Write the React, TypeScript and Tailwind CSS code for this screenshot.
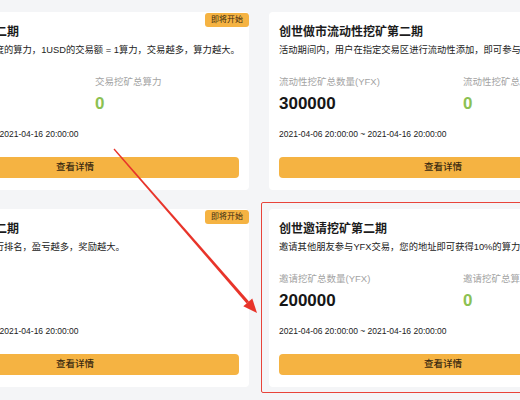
const font = "font-['Liberation_Sans','Noto_Sans_CJK_SC',sans-serif]"

type Stat = { label: string; value: string; green?: boolean }

type CardData = {
  title: string
  desc: string
  stats: Stat[]
  date: string
  badge?: boolean
}

const cards: CardData[] = [
  {
    title: '创世交易挖矿第二期',
    desc: '交易即可获得相应额度的算力，1USD的交易额 = 1算力，交易越多，算力越大。',
    stats: [
      { label: '交易挖矿总数量', value: '500000' },
      { label: '交易挖矿总算力', value: '0', green: true },
    ],
    date: '2021-04-06 20:00:00 ~ 2021-04-16 20:00:00',
    badge: true,
  },
  {
    title: '创世做市流动性挖矿第二期',
    desc: '活动期间内，用户在指定交易区进行流动性添加，即可参与流动性挖矿。',
    stats: [
      { label: '流动性挖矿总数量(YFX)', value: '300000' },
      { label: '流动性挖矿总算力', value: '0', green: true },
    ],
    date: '2021-04-06 20:00:00 ~ 2021-04-16 20:00:00',
  },
  {
    title: '创世盈亏挖矿第二期',
    desc: '根据用户盈亏情况进行排名，盈亏越多，奖励越大。',
    stats: [],
    date: '2021-04-06 20:00:00 ~ 2021-04-16 20:00:00',
    badge: true,
  },
  {
    title: '创世邀请挖矿第二期',
    desc: '邀请其他朋友参与YFX交易，您的地址即可获得10%的算力奖励。',
    stats: [
      { label: '邀请挖矿总数量(YFX)', value: '200000' },
      { label: '邀请挖矿总算力', value: '0', green: true },
    ],
    date: '2021-04-06 20:00:00 ~ 2021-04-16 20:00:00',
  },
]

function Card({ c }: { c: CardData }) {
  return (
    <div className="relative h-[178px] overflow-hidden rounded bg-white px-2.5 pt-3">
      {c.badge && (
        <div className="absolute right-0 top-px flex h-[14px] w-[44px] items-center justify-center rounded-[3px] bg-[#f5b342] text-[8px] text-[#3a2a10]">
          即将开始
        </div>
      )}
      <div className="whitespace-nowrap text-[12px] font-bold leading-4 text-[#1c1c1c]">{c.title}</div>
      <div className="mt-[3px] whitespace-nowrap text-[9.3px] leading-[14px] text-[#222]">{c.desc}</div>
      <div className="mt-[18px] flex h-[39px]">
        {c.stats.map((s, i) => (
          <div key={i} className={i === 0 ? 'w-[184px] shrink-0' : 'whitespace-nowrap'}>
            <div className="whitespace-nowrap text-[9.5px] leading-[14px] text-[#a3a3a3]">{s.label}</div>
            <div
              className={
                'mt-[5px] text-[17px] font-bold leading-5 ' + (s.green ? 'text-[#8cc152]' : 'text-[#161616]')
              }
            >
              {s.value}
            </div>
          </div>
        ))}
      </div>
      <div className="mt-[14px] whitespace-nowrap text-[8.5px] font-medium leading-3 text-[#222]">{c.date}</div>
      <div className="mt-[17px] flex h-[21px] items-center justify-center rounded-sm bg-[#f5b342] text-[9.5px] font-medium text-[#3a2a10]">
        查看详情
      </div>
    </div>
  )
}

export default function App() {
  return (
    <div className={'relative h-[400px] w-[520px] overflow-hidden bg-[#f4f5f7] ' + font}>
      <div className="ml-[-99px] grid w-max grid-cols-[348px_348px] gap-x-5 gap-y-[19px] pt-3">
        {cards.map((c, i) => (
          <Card key={i} c={c} />
        ))}
      </div>

      {/* highlight box */}
      <div className="absolute left-[261px] top-[202px] h-[191px] w-[370px] rounded-[2px] border-[1.5px] border-[#e8443a]" />

      {/* arrow */}
      <svg className="absolute left-0 top-0" width="520" height="400" viewBox="0 0 520 400">
        <polygon
          points="113.5,149.4 114.5,148.6 249,301.4 246.6,303.4"
          fill="#e8342a"
        />
        <polygon points="257,313 243.3,306.3 252.3,298.5" fill="#e8342a" />
      </svg>
    </div>
  )
}
